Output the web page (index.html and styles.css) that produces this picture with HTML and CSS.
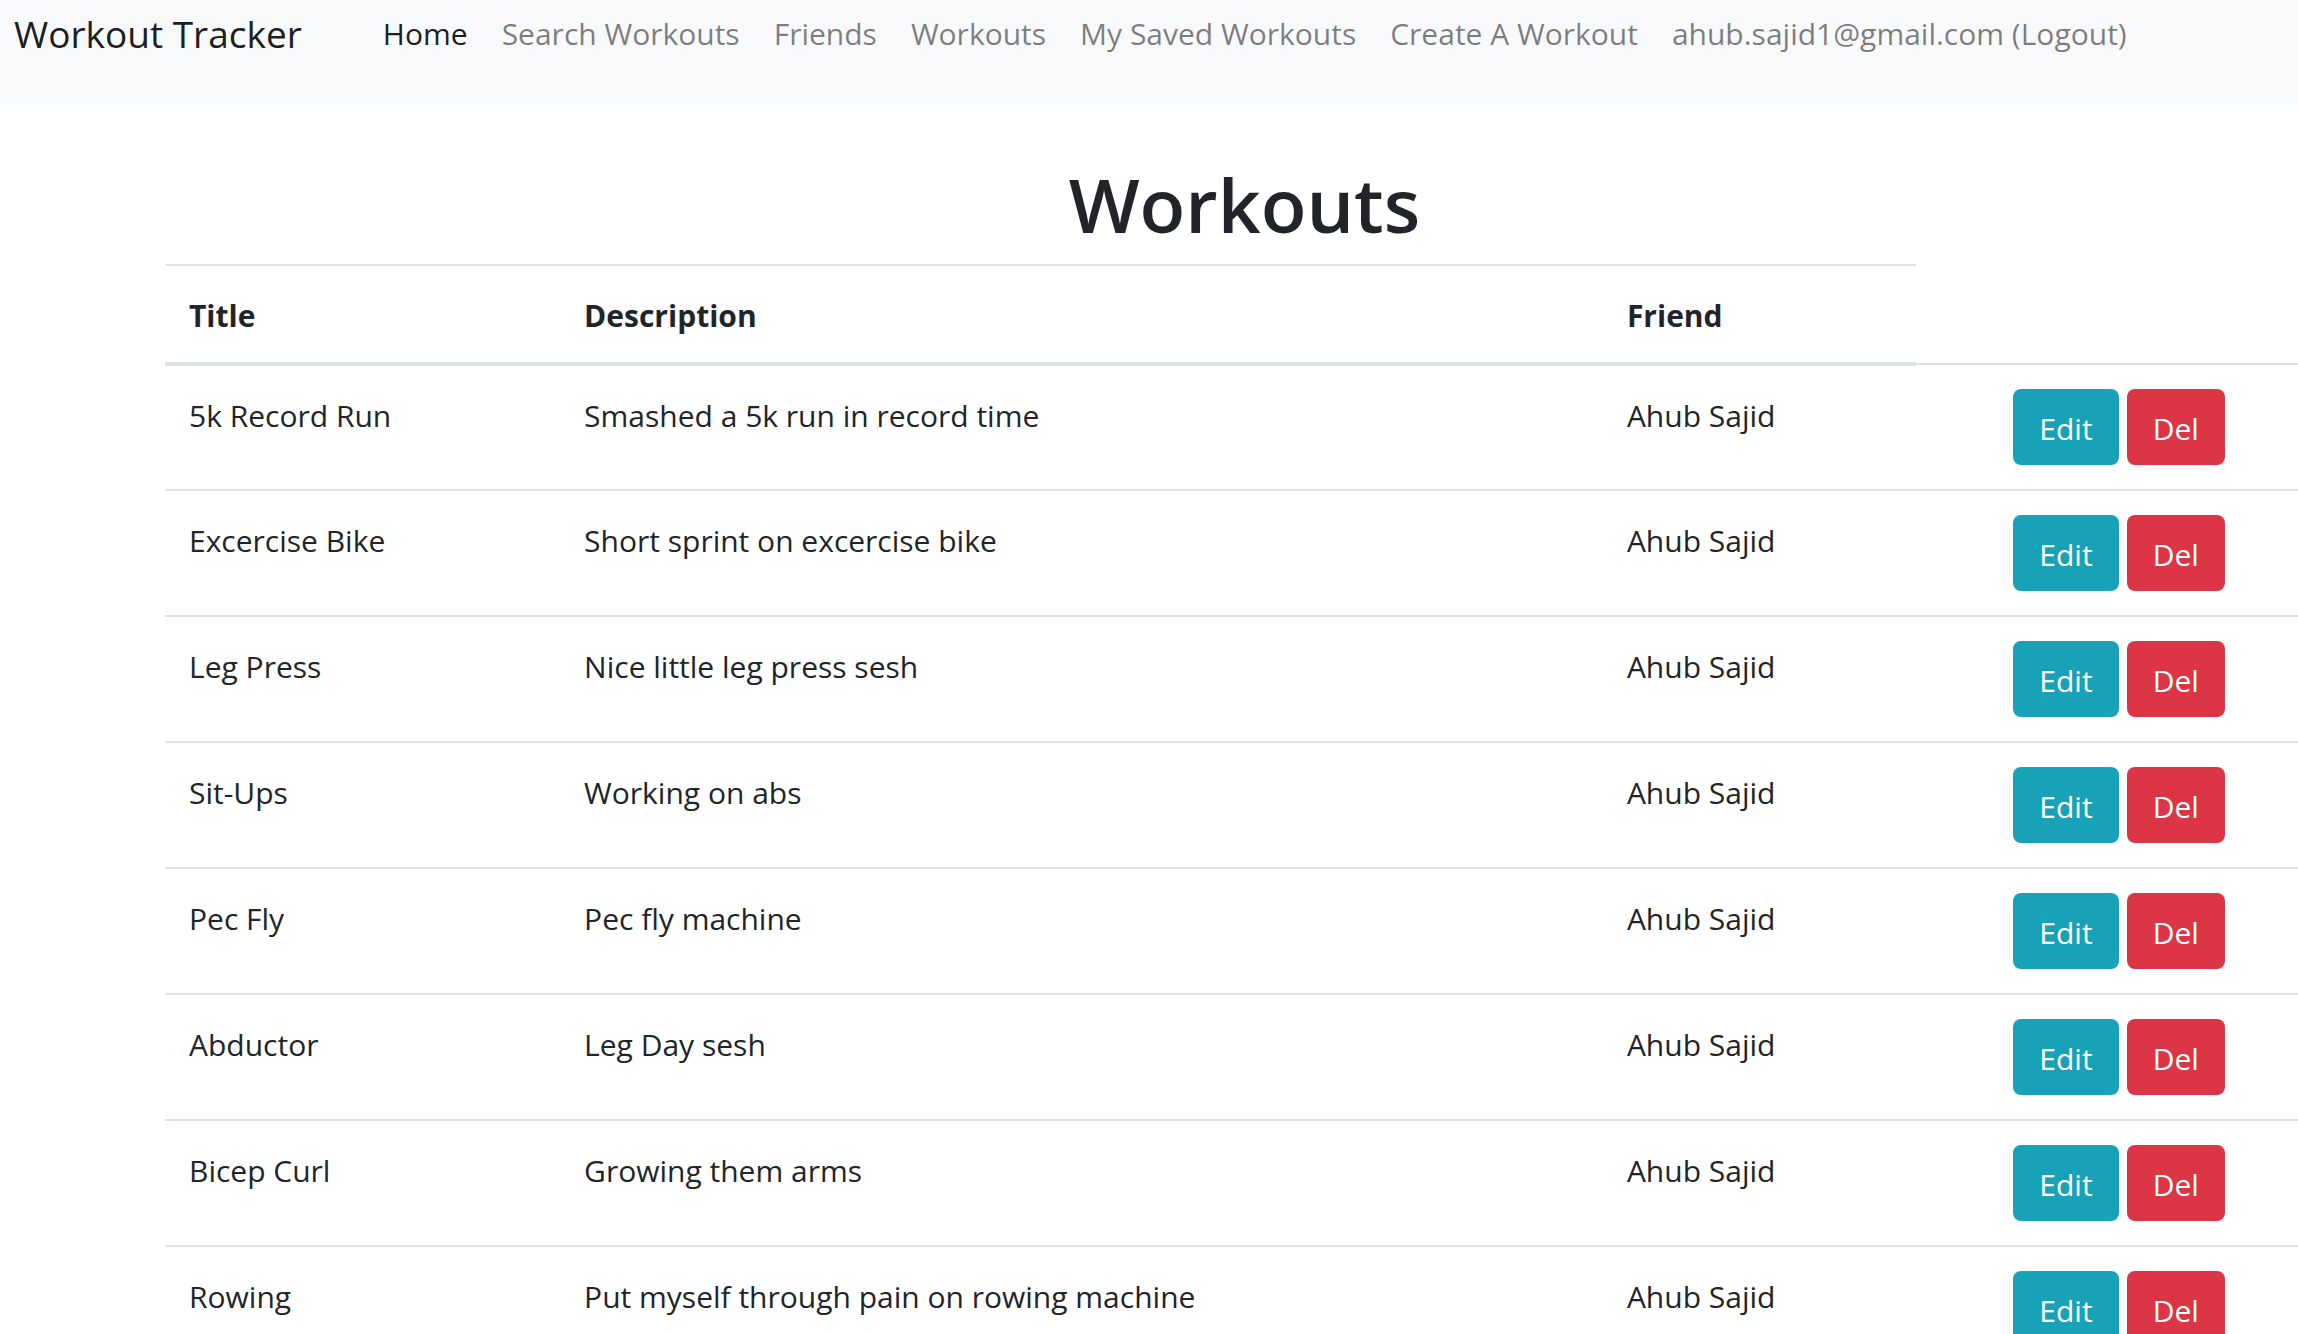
FILE: index.html
```html
<!DOCTYPE html>
<html lang="en">
<head>
<meta charset="utf-8">
<meta name="viewport" content="width=device-width, initial-scale=1">
<title>Workout Tracker</title>
<link rel="stylesheet" href="styles.css">
</head>
<body>
<nav class="navbar">
  <a class="brand" href="#">Workout Tracker</a>
  <ul class="nav-list">
    <li><a class="nav-link active" href="#">Home</a></li>
    <li><a class="nav-link" href="#">Search Workouts</a></li>
    <li><a class="nav-link" href="#">Friends</a></li>
    <li><a class="nav-link" href="#">Workouts</a></li>
    <li><a class="nav-link" href="#">My Saved Workouts</a></li>
    <li><a class="nav-link" href="#">Create A Workout</a></li>
    <li><a class="nav-link" href="#">ahub.sajid1@gmail.com (Logout)</a></li>
  </ul>
</nav>
<main class="content">
  <h1 class="page-title">Workouts</h1>
  <table class="table">
    <colgroup><col class="col-title"><col class="col-description"><col class="col-friend"><col class="col-spacer"><col></colgroup>
    <thead>
      <tr><th scope="col">Title</th><th scope="col">Description</th><th scope="col">Friend</th></tr>
    </thead>
    <tbody>
      <tr><td>5k Record Run</td><td>Smashed a 5k run in record time</td><td>Ahub Sajid</td><td></td><td><div class="actions"><button class="btn btn-info" type="button">Edit</button><button class="btn btn-danger" type="button">Del</button></div></td></tr>
      <tr><td>Excercise Bike</td><td>Short sprint on excercise bike</td><td>Ahub Sajid</td><td></td><td><div class="actions"><button class="btn btn-info" type="button">Edit</button><button class="btn btn-danger" type="button">Del</button></div></td></tr>
      <tr><td>Leg Press</td><td>Nice little leg press sesh</td><td>Ahub Sajid</td><td></td><td><div class="actions"><button class="btn btn-info" type="button">Edit</button><button class="btn btn-danger" type="button">Del</button></div></td></tr>
      <tr><td>Sit-Ups</td><td>Working on abs</td><td>Ahub Sajid</td><td></td><td><div class="actions"><button class="btn btn-info" type="button">Edit</button><button class="btn btn-danger" type="button">Del</button></div></td></tr>
      <tr><td>Pec Fly</td><td>Pec fly machine</td><td>Ahub Sajid</td><td></td><td><div class="actions"><button class="btn btn-info" type="button">Edit</button><button class="btn btn-danger" type="button">Del</button></div></td></tr>
      <tr><td>Abductor</td><td>Leg Day sesh</td><td>Ahub Sajid</td><td></td><td><div class="actions"><button class="btn btn-info" type="button">Edit</button><button class="btn btn-danger" type="button">Del</button></div></td></tr>
      <tr><td>Bicep Curl</td><td>Growing them arms</td><td>Ahub Sajid</td><td></td><td><div class="actions"><button class="btn btn-info" type="button">Edit</button><button class="btn btn-danger" type="button">Del</button></div></td></tr>
      <tr><td>Rowing</td><td>Put myself through pain on rowing machine</td><td>Ahub Sajid</td><td></td><td><div class="actions"><button class="btn btn-info" type="button">Edit</button><button class="btn btn-danger" type="button">Del</button></div></td></tr>
    </tbody>
  </table>
</main>
</body>
</html>
```
FILE: styles.css
```css
* {
  box-sizing: border-box;
}

body {
  margin: 0;
  overflow: hidden;
  background: #fff;
  color: #212529;
  font-family: "Segoe UI", "Open Sans", "Noto Sans", sans-serif;
  font-size: 30px;
  line-height: 48px;
}

.navbar {
  display: flex;
  align-items: flex-start;
  gap: 64px;
  padding: 10px 14px 46px;
  background: #f8f9fa;
}

.brand {
  color: rgba(0, 0, 0, 0.9);
  font-size: 37px;
  text-decoration: none;
  white-space: nowrap;
}

.nav-list {
  display: flex;
  margin: 0;
  padding: 0;
  list-style: none;
}

.nav-link {
  padding: 0 17px;
  color: rgba(0, 0, 0, 0.5);
  text-decoration: none;
  white-space: nowrap;
}

.nav-link.active {
  color: rgba(0, 0, 0, 0.9);
}

/* The table runs slightly past the right edge of the window. */
.content {
  margin: 0 -26px 0 165px;
  padding-top: 52px;
}

.page-title {
  margin: 0 0 12px;
  font-size: 75px;
  font-weight: 600;
  line-height: 96px;
  text-align: center;
}

.table {
  width: 100%;
  table-layout: fixed;
  border-collapse: collapse;
  line-height: 52px;
}

.col-title {
  width: 18.3%;
}

.col-description {
  width: 48.3%;
}

.col-friend {
  width: 14.5%;
}

.col-spacer {
  width: 3.4%;
}

.table th,
.table td {
  padding: 24px;
  border-top: 2px solid #dee2e6;
  text-align: left;
  vertical-align: top;
}

.table th {
  padding-bottom: 20px;
  border-bottom: 4px solid #dee2e6;
  font-weight: 700;
}

.actions {
  display: flex;
  gap: 8px;
}

.btn {
  padding: 14px 26px 10px;
  border: 0;
  border-radius: 8px;
  color: #fff;
  font: inherit;
  cursor: pointer;
}

.btn-info {
  background: #17a2b8;
}

.btn-danger {
  background: #dc3545;
}
```
